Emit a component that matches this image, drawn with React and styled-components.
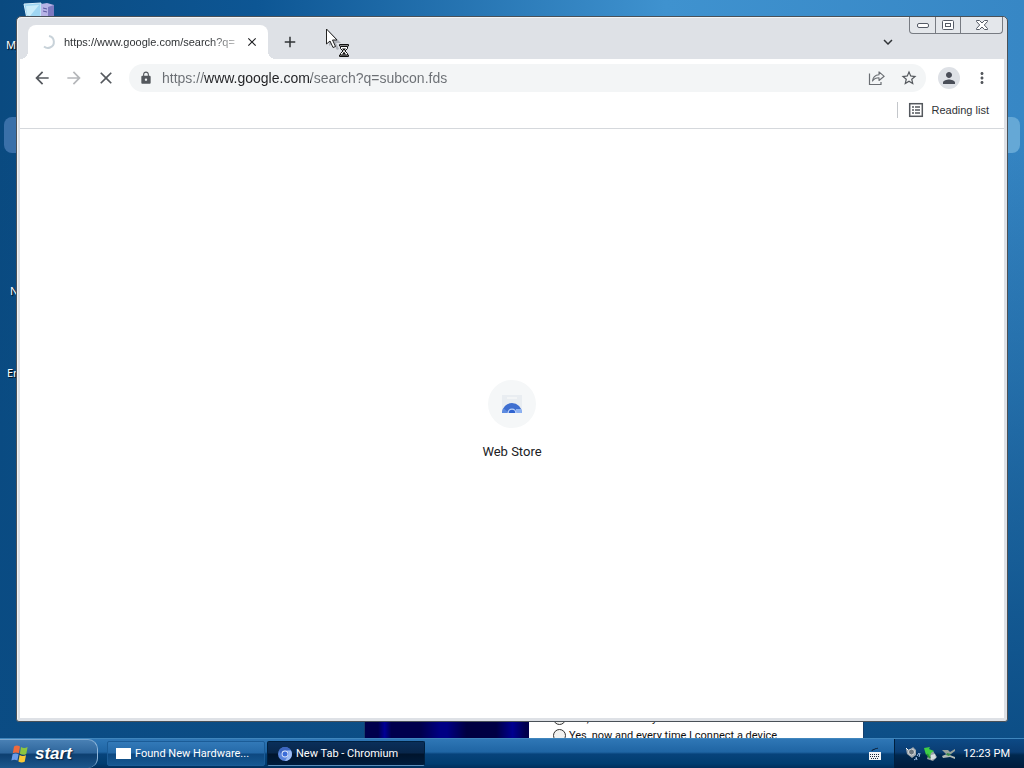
import React, { useState } from 'react';
import styled, { createGlobalStyle } from 'styled-components';
import {
  MdArrowBack,
  MdArrowForward,
  MdClose,
  MdAdd,
  MdLock,
  MdStarOutline,
  MdPerson,
  MdMoreVert,
  MdKeyboardArrowDown,
} from 'react-icons/md';

const GlobalStyle = createGlobalStyle`
  * {
    box-sizing: border-box;
  }
  body {
    margin: 0;
  }
  button {
    padding: 0;
    border: none;
    background: none;
    font: inherit;
    color: inherit;
  }
`;

function ShareIcon() {
  return (
    <svg width='18' height='16' viewBox='0 0 18 16' fill='none' stroke='#6a6e73'>
      <path d='M1.500 3.500v11h11.500v-2.500' strokeWidth='1.200' />
      <path
        d='M4.500 11c.4-4 2.400-6 6.500-6.300V1.800L16.200 6.300 11 10.500V7.800C8 7.800 6 8.800 4.500 11z'
        strokeWidth='1.100'
        strokeLinejoin='round'
      />
    </svg>
  );
}

function ReadingListIcon() {
  return (
    <svg width='16' height='16' viewBox='0 0 16 16' fill='none' stroke='#54585d'>
      <rect x='1.700' y='1.700' width='12.600' height='12.600' strokeWidth='1.500' />
      <path d='M4 5h2M4 8h2M4 11h2M7 5h5M7 8h5M7 11h5' strokeWidth='1.500' />
    </svg>
  );
}

function WebStoreIcon() {
  return (
    <svg width='24' height='24' viewBox='0 0 24 24'>
      <path d='M2 3h20v18H2z' fill='#e9edf1' />
      <path d='M7 5h10v2H7z' fill='#f3f5f6' />
      <path d='M2 21a10 10 0 0 1 20 0z' fill='#3f6fd0' />
      <path d='M2 21a10 10 0 0 1 1.300-5L9 21z' fill='#5c8ae0' />
      <path d='M16 17h5.200a10 10 0 0 1 .8 4h-6z' fill='#8db2f2' />
      <path d='M7.500 21a4.500 4.500 0 0 1 9 0z' fill='#b9d0f8' />
      <path d='M8.800 21a3.200 3.200 0 0 1 6.400 0z' fill='#2f63cf' />
    </svg>
  );
}

function ChromiumIcon() {
  return (
    <svg width='14' height='14' viewBox='0 0 14 14'>
      <circle cx='7' cy='7' r='7' fill='#5b86dc' />
      <path d='M1 3.500A7 7 0 0 1 13 3.500H7A3.500 3.500 0 0 0 4 9z' fill='#3c66c0' />
      <path d='M13 3.500A7 7 0 0 1 7 14l3-5.200A3.500 3.500 0 0 0 9 3.500z' fill='#9dbdf5' />
      <circle cx='7' cy='7' r='3.400' fill='#dfe9fc' />
      <circle cx='7' cy='7' r='2.500' fill='#3a6cd8' />
    </svg>
  );
}

function FlagIcon() {
  return (
    <svg width='18' height='18' viewBox='0 0 18 18'>
      <path d='M3 1.500c2-1.500 4-1.300 6 0L7.800 8.300c-2-1.200-4-1.200-6 0z' fill='#ee6a3c' />
      <path d='M10 2c2 1.300 4.300 1.300 6.600 0l-1.300 7c-2.200 1.200-4.300 1.100-6.400-.2z' fill='#8dc63f' />
      <path d='M1.600 9.300c2-1.200 4-1.200 6 0l-1.200 6.300c-2-1.300-4-1.300-6 0z' fill='#6a9be8' />
      <path d='M8.600 10c2 1.200 4.200 1.300 6.400.2l-1.300 6.600c-2.200 1.200-4.300 1-6.300-.2z' fill='#fbc934' />
    </svg>
  );
}

function ComputerIcon() {
  return (
    <svg width='32' height='30' viewBox='0 0 32 30'>
      <path d='M1 2l17-1v16H4z' fill='#9fd6f2' stroke='#d5eefb' />
      <path d='M3 4l13-1-9 11-3-1z' fill='#c9ecfa' />
      <path d='M18 2l6-1 7 2v16l-6 3-7-3z' fill='#b7b3e6' />
      <path d='M25 5l6-2v16l-6 3z' fill='#7d79c0' />
      <path d='M20 6l4 1M20 9l4 1' stroke='#5a58a0' />
    </svg>
  );
}

function PointerIcon() {
  return (
    <svg width='26' height='30' viewBox='0 0 26 30'>
      <path d='M4 3l12 12h-5l3 6-2 1-4-7-4 3z' fill='#8d9199' opacity='.6' />
      <path
        d='M1.500 1v15l3.500-3 3 6.500 2.500-1L7.500 12H12z'
        fill='#fff'
        stroke='#222'
        strokeLinejoin='round'
      />
      <path d='M14.500 16.500h9v1.500h-9zM14.500 27h9v1.500h-9z' fill='#fff' stroke='#111' />
      <path d='M15.500 18.500h7v2L20 23l2.500 2.500V27h-7v-1.500L18 23l-2.500-2.500z' fill='#fff' stroke='#111' />
      <path d='M17 20.500h4L19 23zM19 23.500l2 3h-4z' fill='#111' />
    </svg>
  );
}

function KeyboardIcon() {
  return (
    <svg width='14' height='14' viewBox='0 0 14 14'>
      <path d='M4 4c0-2 2-1 3-2s2 0 3-1' stroke='#0a1c33' fill='none' />
      <path d='M1 5h12v8H1z' fill='#f3f5f7' />
      <path d='M2 7.500h10M2 9.500h10M3 11.500h8' stroke='#1b2a3c' strokeDasharray='1 1' />
    </svg>
  );
}

function SpeakerIcon() {
  return (
    <svg width='16' height='16' viewBox='0 0 16 16' fill='none'>
      <path d='M1 3l4 1 3-3 3 3v5l-4 3-5-4z' fill='#a0a8ae' />
      <circle cx='6.500' cy='6' r='3' fill='#6c757c' stroke='#d5dade' />
      <path d='M1 2l2 2' stroke='#fff' />
      <path d='M9 14l3-2M11 11l1 3M12 10l2-3M14 11l1-4' stroke='#a9c9f3' />
    </svg>
  );
}

function UnplugIcon() {
  return (
    <svg width='16' height='16' viewBox='0 0 16 16'>
      <path d='M6 7l4-2 4 6-4 4-6-2z' fill='#99a2a6' />
      <path d='M8 9l4-1 1 4-5 2z' fill='#d8dee0' />
      <path d='M1 2l6-1-1 2 5 2-3 2-1 3-3-2-1 1z' fill='#3fce45' />
      <path d='M4 8l3 4' stroke='#2a9a33' strokeWidth='2' />
    </svg>
  );
}

function DeviceIcon() {
  return (
    <svg width='16' height='16' viewBox='0 0 16 16'>
      <path d='M1 4h6l2 2 5-3v2l-4 3H5z' fill='#98a39d' />
      <path d='M1 10l5-2 8 3v2l-5-2-7 1z' fill='#b3bcb6' />
      <path d='M6 7l4 1-2 2-3-1z' fill='#3c8a4a' />
    </svg>
  );
}

function App() {
  const [url, setUrl] = useState('https://www.google.com/search?q=subcon.fds');

  return (
    <>
      <GlobalStyle />
      <Desktop>
        <Workspace>
          {/* desktop icons */}
          <Shortcut $top={2} $left={23}>
            <ComputerIcon />
          </Shortcut>
          <Shortcut $top={38} $left={6}>My</Shortcut>
          <Shortcut $top={284} $left={10}>N</Shortcut>
          <Shortcut $top={366} $left={7}>En</Shortcut>
          <SidePad $side='left' />
          <SidePad $side='right' />
          {/* end desktop icons */}

          {/* hardware wizard */}
          <Wizard>
            <WizardArt />
            <WizardBody>
              <label>
                <input type='radio' name='connect' />
                Yes, this time only
              </label>
              <label>
                <input type='radio' name='connect' />
                Yes, now and every time I connect a device
              </label>
            </WizardBody>
          </Wizard>
          {/* end hardware wizard */}

          <Browser>
            <TabStrip>
              <Tab>
                <Spinner viewBox='0 0 16 16'>
                  <path d='M9 2a6 6 0 0 1 1 11.500a6 6 0 0 1-6-1' />
                </Spinner>
                <span className='title'>https://www.google.com/search?q=</span>
                <button type='button' aria-label='Close tab'>
                  <MdClose size={14} />
                </button>
              </Tab>
              <NewTab type='button' aria-label='New tab'>
                <MdAdd size={18} />
              </NewTab>
              <TabSearch type='button' aria-label='Search tabs'>
                <MdKeyboardArrowDown size={18} />
              </TabSearch>
              <Caption>
                <button type='button' aria-label='Minimize'>
                  <svg width='12' height='5'>
                    <rect x='.5' y='.5' width='11' height='4' rx='1.500' />
                  </svg>
                </button>
                <button type='button' aria-label='Maximize'>
                  <svg width='12' height='10'>
                    <rect x='.5' y='.5' width='11' height='9' rx='1' />
                    <rect x='3.500' y='3.500' width='5' height='3' />
                  </svg>
                </button>
                <button type='button' className='wide' aria-label='Close'>
                  <svg width='12' height='10'>
                    <path d='M.5.5h3L6 3 8.500.5h3v1L8.300 5l3.200 3.500v1h-3L6 7 3.500 9.500h-3v-1L3.700 5 .5 1.500z' />
                  </svg>
                </button>
              </Caption>
            </TabStrip>

            <Toolbar>
              <ToolButton type='button' aria-label='Back'>
                <MdArrowBack size={20} />
              </ToolButton>
              <ToolButton type='button' aria-label='Forward' $muted>
                <MdArrowForward size={20} />
              </ToolButton>
              <ToolButton type='button' aria-label='Stop'>
                <MdClose size={20} />
              </ToolButton>
              <Omnibox>
                <MdLock size={14} />
                <input
                  type='text'
                  aria-label='Address'
                  spellCheck={false}
                  value={url}
                  onChange={(e) => setUrl(e.target.value)}
                />
                <ToolButton type='button' aria-label='Share'>
                  <ShareIcon />
                </ToolButton>
                <ToolButton type='button' aria-label='Bookmark'>
                  <MdStarOutline size={18} />
                </ToolButton>
              </Omnibox>
              <Profile type='button' aria-label='Profile'>
                <MdPerson size={18} />
              </Profile>
              <ToolButton type='button' aria-label='Menu'>
                <MdMoreVert size={18} />
              </ToolButton>
            </Toolbar>

            <BookmarkBar>
              <button type='button'>
                <ReadingListIcon />
                Reading list
              </button>
            </BookmarkBar>

            <Page>
              <Tile href='#store'>
                <span className='icon'>
                  <WebStoreIcon />
                </span>
                Web Store
              </Tile>
            </Page>
          </Browser>

          <Pointer>
            <PointerIcon />
          </Pointer>
        </Workspace>

        <Taskbar>
          <Start type='button'>
            <FlagIcon />
            start
          </Start>
          <Task type='button'>
            <span className='blank' />
            Found New Hardware...
          </Task>
          <Task type='button' $active>
            <ChromiumIcon />
            New Tab - Chromium
          </Task>
          <Language>
            <KeyboardIcon />
          </Language>
          <Tray>
            <SpeakerIcon />
            <UnplugIcon />
            <DeviceIcon />
            <time>12:23 PM</time>
          </Tray>
        </Taskbar>
      </Desktop>
    </>
  );
}

const Desktop = styled.div`
  display: flex;
  flex-direction: column;
  height: 100vh;
  overflow: hidden;
  font-family: 'Noto Sans', sans-serif;
  font-size: 11px;
  background:
    linear-gradient(to bottom, transparent 15%, rgba(10, 76, 132, 0.8) 80%, #0b4c84),
    linear-gradient(to right, #0a4a80, #0d5694 25%, #3f92cf 65%, #3787c5);
`;

const Workspace = styled.main`
  position: relative;
  flex: 1;
  min-height: 0;
  overflow: hidden;
`;

const Shortcut = styled.div`
  position: absolute;
  top: ${({ $top }) => $top}px;
  left: ${({ $left }) => $left}px;
  line-height: 14px;
  color: #fff;
  text-shadow: 1px 1px 1px #000;
`;

const SidePad = styled.div`
  position: absolute;
  top: 117px;
  ${({ $side }) => $side}: 4px;
  width: 30px;
  height: 36px;
  border-radius: 8px;
  background: ${({ $side }) => ($side === 'left' ? '#3a70a9' : '#65a8d6')};
`;

const Wizard = styled.section`
  position: absolute;
  left: 364px;
  bottom: -40px;
  display: flex;
  width: 500px;
  height: 360px;
  border: 1px solid #16406e;
`;

const WizardArt = styled.div`
  width: 164px;
  background: linear-gradient(
    to right,
    #00004c 8%,
    #000096 12%,
    #00004c 16%,
    #00004c 34%,
    #000084 46%,
    #000084 50%,
    #000040 62%,
    #000044 80%,
    #000090 90%,
    #00004c 98%
  );
`;

const WizardBody = styled.div`
  flex: 1;
  display: flex;
  flex-direction: column;
  justify-content: flex-end;
  padding: 0 24px 33px;
  background: #fff;
  color: #111;
  label {
    display: flex;
    align-items: center;
    gap: 3px;
    height: 17px;
    font-family: Roboto, sans-serif;
  }
  input {
    appearance: none;
    width: 13px;
    height: 13px;
    margin: 0;
    border: 1px solid #333;
    border-radius: 50%;
    background: #f2f2f0;
  }
`;

const Browser = styled.section`
  position: absolute;
  inset: 16px;
  display: flex;
  flex-direction: column;
  padding: 0 3px 3px;
  border: 1px solid #4a5158;
  border-radius: 5px 5px 3px 3px;
  background: #dee1e6;
  box-shadow: inset 1px 1px 0 #f2f4f6;
  font-family: 'Liberation Sans', Arial, sans-serif;
`;

const TabStrip = styled.header`
  position: relative;
  display: flex;
  align-items: flex-end;
  height: 42px;
  padding-left: 8px;
  color: #303336;
`;

const Tab = styled.div`
  position: relative;
  display: flex;
  align-items: center;
  width: 240px;
  height: 34px;
  padding: 0 8px 0 12px;
  border-radius: 8px 8px 0 0;
  background: #fff;
  &::before,
  &::after {
    content: '';
    position: absolute;
    bottom: 0;
    width: 8px;
    height: 8px;
  }
  &::before {
    right: 100%;
    background: radial-gradient(circle at 0 0, transparent 8px, #fff 8px);
  }
  &::after {
    left: 100%;
    background: radial-gradient(circle at 100% 0, transparent 8px, #fff 8px);
  }
  .title {
    flex: 1;
    margin: 0 9px 0 8px;
    white-space: nowrap;
    mask-image: linear-gradient(to right, #000 85%, rgba(0, 0, 0, 0.3));
  }
  button {
    display: grid;
    place-items: center;
    width: 16px;
    height: 16px;
    color: #202124;
  }
`;

const Spinner = styled.svg`
  width: 16px;
  height: 16px;
  fill: none;
  stroke: #c8d2d9;
  stroke-width: 2;
`;

const NewTab = styled.button`
  display: grid;
  place-items: center;
  width: 28px;
  height: 34px;
  margin-left: 8px;
`;

const TabSearch = styled(NewTab)`
  margin-left: auto;
  margin-right: 102px;
`;

const Caption = styled.div`
  position: absolute;
  top: 0;
  right: 1px;
  display: flex;
  border: 1px solid #777b82;
  border-top: none;
  border-radius: 0 0 4px 4px;
  background: #e4e7eb;
  button {
    display: grid;
    place-items: center;
    width: 25px;
    height: 16px;
  }
  button + button {
    border-left: 1px solid #777b82;
  }
  .wide {
    width: 42px;
  }
  svg {
    fill: #fff;
    stroke: #555b66;
  }
`;

const Toolbar = styled.nav`
  display: flex;
  align-items: center;
  gap: 4px;
  height: 37px;
  padding: 0 8px;
  background: #fff;
`;

const ToolButton = styled.button`
  display: grid;
  place-items: center;
  flex: none;
  width: 28px;
  height: 28px;
  color: ${({ $muted }) => ($muted ? '#b5b7ba' : '#54585d')};
`;

const Omnibox = styled.div`
  flex: 1;
  display: flex;
  align-items: center;
  gap: 4px;
  height: 28px;
  margin: 0 4px 0 5px;
  padding: 0 3px 0 10px;
  border-radius: 14px;
  background: #f3f5f6;
  color: #54585d;
  input {
    flex: 1;
    min-width: 0;
    margin-left: 5px;
    padding: 0;
    border: none;
    outline: none;
    font-family: inherit;
    font-size: 14px;
    line-height: 20px;
    color: transparent;
    caret-color: #202124;
    background: linear-gradient(
      to right,
      #6a6e73 42px,
      #202124 42px,
      #202124 149px,
      #6a6e73 149px
    );
    background-clip: text;
  }
`;

const Profile = styled.button`
  display: grid;
  place-items: center;
  width: 22px;
  height: 22px;
  margin: 0 4px;
  border-radius: 50%;
  background: #dee1e6;
  color: #4a4e58;
`;

const BookmarkBar = styled.div`
  display: flex;
  align-items: center;
  justify-content: flex-end;
  height: 33px;
  padding: 0 15px 4px;
  border-bottom: 1px solid #d5d8dc;
  background: #fff;
  button {
    display: flex;
    align-items: center;
    gap: 8px;
    height: 16px;
    padding-left: 10px;
    border-left: 1px solid #c4c7cb;
    color: #303336;
  }
`;

const Page = styled.div`
  flex: 1;
  display: flex;
  align-items: center;
  justify-content: center;
  padding-bottom: 8px;
  background: #fff;
`;

const Tile = styled.a`
  display: flex;
  flex-direction: column;
  align-items: center;
  gap: 16px;
  font-family: Roboto, sans-serif;
  font-size: 13px;
  line-height: 16px;
  color: #202124;
  text-decoration: none;
  .icon {
    display: grid;
    place-items: center;
    width: 48px;
    height: 48px;
    border-radius: 50%;
    background: #f5f7f8;
  }
`;

const Pointer = styled.div`
  position: absolute;
  top: 28px;
  left: 325px;
`;

const Taskbar = styled.footer`
  display: flex;
  align-items: center;
  height: 30px;
  border-top: 1px solid #3f86bd;
  background: linear-gradient(to bottom, #2f77b6, #1f65a4 45%, #07437b 52%, #003d70 85%, #002e5c);
  font-family: Roboto, sans-serif;
  color: #fff;
`;

const Start = styled.button`
  display: flex;
  align-items: center;
  gap: 6px;
  width: 98px;
  height: 100%;
  margin-right: 9px;
  padding-left: 11px;
  border-right: 1px solid #8fb6da;
  border-top: 1px solid #7ea9d0;
  border-radius: 0 10px 10px 0;
  background: linear-gradient(to bottom, #4980b4, #2e669c 45%, #0d3f70 52%, #1d578c);
  font-family: 'Liberation Sans', Arial, sans-serif;
  font-size: 17px;
  font-weight: bold;
  font-style: italic;
  text-shadow: 1px 1px 1px #0a2340;
`;

const Task = styled.button`
  display: flex;
  align-items: center;
  gap: 4px;
  width: 158px;
  height: 25px;
  margin-right: 2px;
  padding-left: ${({ $active }) => ($active ? 10 : 8)}px;
  border: 1px solid ${({ $active }) => ($active ? '#00203f' : '#1b5c97')};
  border-bottom-color: ${({ $active }) => ($active ? '#5c8db8' : '#1b5c97')};
  border-radius: 2px;
  background: ${({ $active }) =>
    $active
      ? 'linear-gradient(to bottom, #0a2f5a, #08264a 48%, #00142c 52%, #001c3c)'
      : 'linear-gradient(to bottom, #3279b8, #2469a8 48%, #0d4880 52%, #155891)'};
  white-space: nowrap;
  .blank {
    width: 15px;
    height: 11px;
    background: #fff;
  }
`;

const Language = styled.div`
  display: flex;
  margin-left: auto;
  margin-right: 12px;
`;

const Tray = styled.div`
  display: flex;
  align-items: center;
  gap: 2px;
  height: 100%;
  padding: 0 14px 0 10px;
  border-left: 1px solid #00203f;
  background: linear-gradient(to bottom, #0d4a86, #0a3d73 45%, #00284f 55%, #001c3c);
  time {
    margin-left: 4px;
    white-space: nowrap;
  }
`;

export default App;
